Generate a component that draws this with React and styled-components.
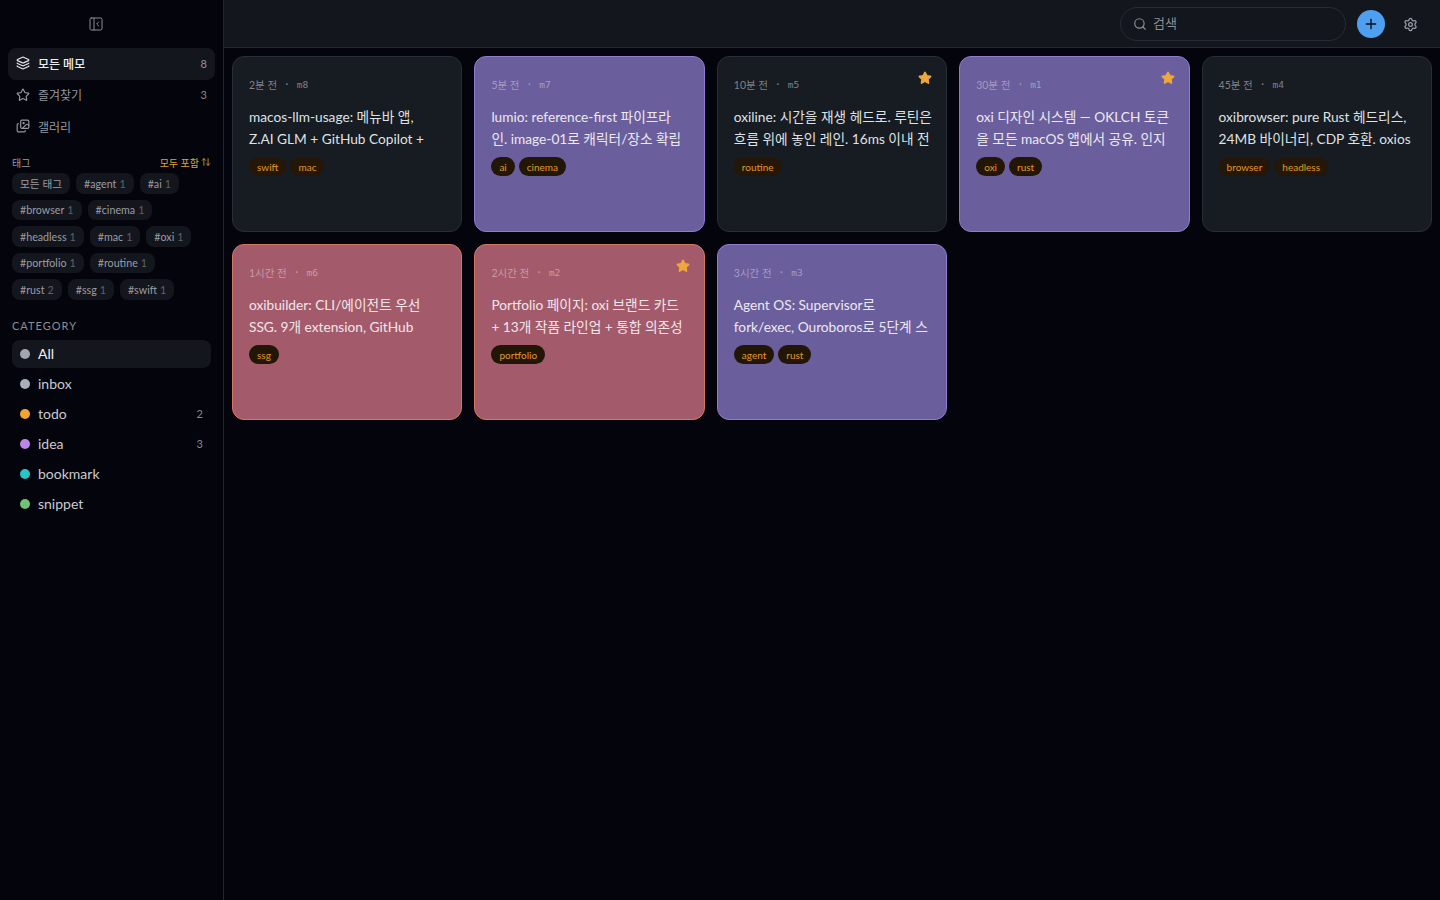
import React from 'react';
import styled, { createGlobalStyle } from 'styled-components';
import { Layers, Star, Images, PanelLeftClose, ArrowUpDown, Search, Plus, Settings } from 'lucide-react';

const FONT = `Lato, "Noto Sans CJK KR", sans-serif`;
const MONO = `"DejaVu Sans Mono", "Noto Sans CJK KR", monospace`;

const GlobalStyle = createGlobalStyle`
  html, body { margin: 0; padding: 0; background: #03040c; }
  * { box-sizing: border-box; }
  body { font-family: ${FONT}; color: #e6e7ea; }
`;

const Shell = styled.div`
  display: flex;
  width: 1440px;
  height: 900px;
  overflow: hidden;
  background: #03040c;
`;

const Sidebar = styled.aside`
  width: 224px;
  flex: none;
  border-right: 1px solid #23262e;
  padding: 0 8px;
`;

const CollapseRow = styled.div`
  height: 48px;
  display: flex;
  align-items: center;
  justify-content: center;
  padding-right: 32px;
  color: #8b8e96;
`;

const NavItem = styled.div`
  height: 32px;
  display: flex;
  align-items: center;
  gap: 8px;
  padding: 0 8px 2px;
  border-radius: 8px;
  font-size: 12px;
  font-weight: ${p => (p.$active ? 500 : 400)};
  background: ${p => (p.$active ? '#14161d' : 'transparent')};
  color: ${p => (p.$active ? '#eceef1' : '#94979e')};
  & + & { margin-top: -0.5px; }
`;

const Count = styled.span`
  margin-left: auto;
  font-size: 11px;
  color: #878a92;
`;

const TagHead = styled.div`
  display: flex;
  justify-content: space-between;
  align-items: center;
  margin-top: 12px;
  padding: 0 4px;
  height: 14px;
  font-size: 10px;
  color: #9a9da4;
`;

const TagMode = styled.span`
  display: flex;
  align-items: center;
  gap: 2px;
  color: #e5a030;
`;

const TagCloud = styled.div`
  display: flex;
  flex-wrap: wrap;
  gap: 6px;
  padding: 0 8px 0 4px;
  margin-top: 4px;
`;

const TagChip = styled.span`
  height: 20.5px;
  display: flex;
  align-items: center;
  gap: 3px;
  padding: 0 8px;
  border-radius: 8px;
  background: #14161d;
  font-size: 10.7px;
  color: #9a9da4;
  em { font-style: normal; color: #5f626a; }
`;

const SectionLabel = styled.div`
  margin-top: 19px;
  padding: 0 4px;
  font-size: 11px;
  letter-spacing: 1px;
  color: #8b8e96;
  line-height: 14px;
`;

const CategoryList = styled.div`
  margin: 7px 4px 0;
`;

const CategoryRow = styled.div`
  height: 28px;
  margin-bottom: 2px;
  display: flex;
  align-items: center;
  gap: 8px;
  padding: 0 8px;
  border-radius: 8px;
  font-size: 14px;
  background: ${p => (p.$active ? '#14161d' : 'transparent')};
  color: ${p => (p.$active ? '#f0f1f3' : '#c9cbcf')};
`;

const Dot = styled.span`
  width: 10px;
  height: 10px;
  border-radius: 50%;
  background: ${p => p.$color};
`;

const Main = styled.main`
  flex: 1;
  min-width: 0;
  display: flex;
  flex-direction: column;
`;

const TopBar = styled.header`
  height: 48px;
  flex: none;
  display: flex;
  align-items: center;
  justify-content: flex-end;
  gap: 12px;
  padding: 1px 16px 0 0;
  background: #14161e;
  border-bottom: 1px solid #262932;
`;

const SearchBox = styled.div`
  width: 226px;
  height: 34px;
  display: flex;
  align-items: center;
  gap: 6px;
  padding: 0 12px;
  border: 1px solid #282b34;
  border-radius: 17px;
  font-size: 13px;
  color: #8b8e96;
`;

const SearchHint = styled.span`
  padding-bottom: 3px;
`;

const AddButton = styled.div`
  width: 28px;
  height: 28px;
  margin: 0 -1px;
  border-radius: 50%;
  background: #4e9ff0;
  color: #0b0d14;
  display: flex;
  align-items: center;
  justify-content: center;
`;

const IconButton = styled.div`
  width: 28px;
  height: 28px;
  display: flex;
  align-items: center;
  justify-content: center;
  color: #9a9da4;
`;

const CardGrid = styled.div`
  display: grid;
  grid-template-columns: repeat(5, 1fr);
  grid-auto-rows: 176px;
  gap: 12px;
  padding: 8px;
`;

const TONES = {
  plain: { bg: '#171b22', border: '#2a2d35', meta: '#7f8289', text: '#dfe1e4', tag: '#241707' },
  purple: { bg: '#6b5e9c', border: '#9179cd', meta: '#a39bc2', text: '#ece9f3', tag: '#221607' },
  red: { bg: '#a35b6c', border: '#d4775f', meta: '#c99aa6', text: '#f3e6e9', tag: '#221607' },
};

const Card = styled.article`
  position: relative;
  padding: 20px 16px 0;
  border-radius: 12px;
  overflow: hidden;
  background: ${p => TONES[p.$tone].bg};
  border: 1px solid ${p => TONES[p.$tone].border};
`;

const Meta = styled.div`
  display: flex;
  align-items: center;
  gap: 8.5px;
  height: 14px;
  font-size: 10.5px;
  color: ${p => TONES[p.$tone].meta};
`;

const MemoId = styled.span`
  font-family: ${MONO};
  font-size: 9.5px;
`;

const Title = styled.div`
  margin-top: 15px;
  height: 44px;
  font-size: 13.7px;
  line-height: 22px;
  color: ${p => TONES[p.$tone].text};
`;

const TitleLine = styled.span`
  display: block;
  white-space: nowrap;
`;

const CardTags = styled.div`
  display: flex;
  gap: 4px;
  margin-top: 7px;
`;

const CardTag = styled.span`
  height: 19px;
  display: flex;
  align-items: center;
  padding: 0 8px;
  border-radius: 10px;
  font-size: 10px;
  color: #e0992c;
  background: ${p => TONES[p.$tone].tag};
`;

const Pin = styled.span`
  position: absolute;
  top: 14px;
  right: 14px;
  display: flex;
  color: #eea73b;
`;

const TAGS = [
  ['모든 태그'], ['#agent', 1], ['#ai', 1], ['#browser', 1], ['#cinema', 1], ['#headless', 1],
  ['#mac', 1], ['#oxi', 1], ['#portfolio', 1], ['#routine', 1], ['#rust', 2], ['#ssg', 1], ['#swift', 1],
];

const CATEGORIES = [
  { name: 'All', color: '#a3a6ae', active: true },
  { name: 'inbox', color: '#a9b0ba' },
  { name: 'todo', color: '#f0a530', count: 2 },
  { name: 'idea', color: '#bd85e8', count: 3 },
  { name: 'bookmark', color: '#28c4c6' },
  { name: 'snippet', color: '#70c274' },
];

const MEMOS = [
  { time: '2분 전', id: 'm8', tone: 'plain', lines: ['macos-llm-usage: 메뉴바 앱,', 'Z.AI GLM + GitHub Copilot +'], tags: ['swift', 'mac'] },
  { time: '5분 전', id: 'm7', tone: 'purple', lines: ['lumio: reference-first 파이프라', '인. image-01로 캐릭터/장소 확립'], tags: ['ai', 'cinema'] },
  { time: '10분 전', id: 'm5', tone: 'plain', star: true, lines: ['oxiline: 시간을 재생 헤드로. 루틴은', '흐름 위에 놓인 레인. 16ms 이내 전'], tags: ['routine'] },
  { time: '30분 전', id: 'm1', tone: 'purple', star: true, lines: ['oxi 디자인 시스템 — OKLCH 토큰', '을 모든 macOS 앱에서 공유. 인지'], tags: ['oxi', 'rust'] },
  { time: '45분 전', id: 'm4', tone: 'plain', lines: ['oxibrowser: pure Rust 헤드리스,', '24MB 바이너리, CDP 호환. oxios'], tags: ['browser', 'headless'] },
  { time: '1시간 전', id: 'm6', tone: 'red', lines: ['oxibuilder: CLI/에이전트 우선', 'SSG. 9개 extension, GitHub'], tags: ['ssg'] },
  { time: '2시간 전', id: 'm2', tone: 'red', star: true, lines: ['Portfolio 페이지: oxi 브랜드 카드', '+ 13개 작품 라인업 + 통합 의존성'], tags: ['portfolio'] },
  { time: '3시간 전', id: 'm3', tone: 'purple', lines: ['Agent OS: Supervisor로', 'fork/exec, Ouroboros로 5단계 스'], tags: ['agent', 'rust'] },
];

export default function App() {
  return (
    <Shell>
      <GlobalStyle />
      <Sidebar>
        <CollapseRow><PanelLeftClose size={16} strokeWidth={1.5} /></CollapseRow>
        <NavItem $active><Layers size={14} color="#e6e7ea" />모든 메모<Count>8</Count></NavItem>
        <NavItem><Star size={14} />즐겨찾기<Count>3</Count></NavItem>
        <NavItem><Images size={14} />갤러리</NavItem>
        <TagHead>
          <span>태그</span>
          <TagMode>모두 포함 <ArrowUpDown size={10} /></TagMode>
        </TagHead>
        <TagCloud>
          {TAGS.map(([name, n]) => (
            <TagChip key={name}>{name}{n && <em>{n}</em>}</TagChip>
          ))}
        </TagCloud>
        <SectionLabel>CATEGORY</SectionLabel>
        <CategoryList>
          {CATEGORIES.map(c => (
            <CategoryRow key={c.name} $active={c.active}>
              <Dot $color={c.color} />
              {c.name}
              {c.count && <Count>{c.count}</Count>}
            </CategoryRow>
          ))}
        </CategoryList>
      </Sidebar>
      <Main>
        <TopBar>
          <SearchBox><Search size={14} /><SearchHint>검색</SearchHint></SearchBox>
          <AddButton><Plus size={16} /></AddButton>
          <IconButton><Settings size={15} /></IconButton>
        </TopBar>
        <CardGrid>
          {MEMOS.map(m => (
            <Card key={m.id} $tone={m.tone}>
              {m.star && <Pin><Star size={14} fill="currentColor" /></Pin>}
              <Meta $tone={m.tone}>
                <span>{m.time}</span><span>·</span><MemoId>{m.id}</MemoId>
              </Meta>
              <Title $tone={m.tone}>
                {m.lines.map(l => <TitleLine key={l}>{l}</TitleLine>)}
              </Title>
              <CardTags>
                {m.tags.map(t => <CardTag key={t} $tone={m.tone}>{t}</CardTag>)}
              </CardTags>
            </Card>
          ))}
        </CardGrid>
      </Main>
    </Shell>
  );
}
